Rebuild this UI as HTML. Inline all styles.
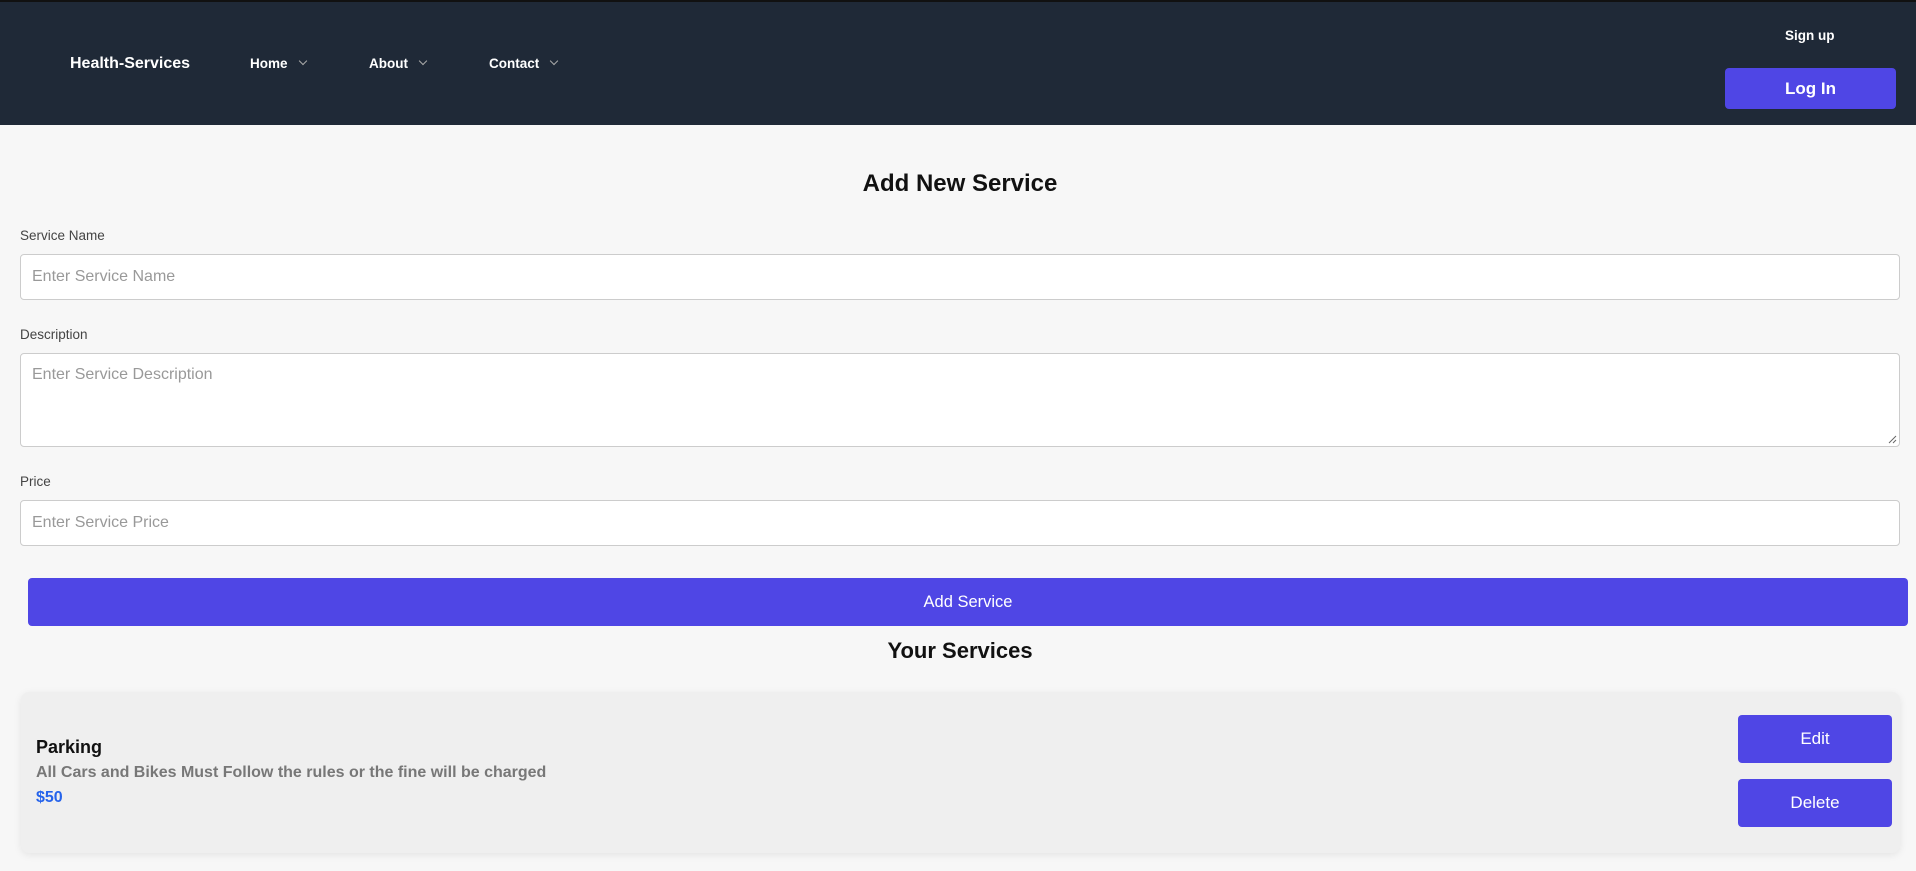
<!DOCTYPE html>
<html><head><style>
*{box-sizing:border-box;margin:0;padding:0}
body{width:1916px;height:871px;overflow:hidden;background:#f7f7f7;font-family:"Liberation Sans",Arial,sans-serif;position:relative}
.hdr{position:absolute;left:0;top:0;width:1916px;height:125px;background:#1f2937;border-top:2px solid #111;}
.t{position:absolute;white-space:nowrap}
.nav{color:#fff;font-weight:bold;font-size:13.5px;top:56px}
.chev{display:inline-block;width:6px;height:6px;border-right:1px solid #aaa;border-bottom:1px solid #aaa;transform:rotate(45deg);margin-left:12px;position:relative;top:-4px}
.btn{position:absolute;background:#4f46e5;color:#fff;border-radius:4px;display:flex;align-items:center;justify-content:center}
.lbl{font-size:13.5px;color:#444;left:20px}
.inp{position:absolute;left:20px;width:1880px;background:#fff;border:1px solid #ccc;border-radius:4px;color:#999;font-size:16px;padding-left:11px}
</style></head><body>
<div class="hdr"></div>
<div class="t" style="left:70px;top:55px;color:#fff;font-weight:bold;font-size:16px">Health-Services</div>
<div class="t nav" style="left:250px">Home<span class="chev"></span></div>
<div class="t nav" style="left:369px">About<span class="chev"></span></div>
<div class="t nav" style="left:489px">Contact<span class="chev"></span></div>
<div class="t" style="left:1785px;top:28px;color:#fff;font-weight:bold;font-size:13.5px">Sign up</div>
<div class="btn" style="left:1725px;top:68px;width:171px;height:41px;font-size:17px;font-weight:bold">Log In</div>

<div class="t" style="left:2px;width:1916px;text-align:center;top:170px;font-size:24px;font-weight:bold;color:#111">Add New Service</div>
<div class="t lbl" style="top:228px">Service Name</div>
<div class="inp" style="top:254px;height:46px;line-height:44px">Enter Service Name</div>
<div class="t lbl" style="top:327px">Description</div>
<div class="inp" style="top:353px;height:94px;padding-top:12px">Enter Service Description
<svg style="position:absolute;right:2px;bottom:2px" width="10" height="10"><path d="M9 2L2 9M9 6L6 9" stroke="#666" stroke-width="1"/></svg></div>
<div class="t lbl" style="top:474px">Price</div>
<div class="inp" style="top:500px;height:46px;line-height:44px">Enter Service Price</div>
<div class="btn" style="left:28px;top:578px;width:1880px;height:48px;font-size:16.5px">Add Service</div>
<div class="t" style="left:0;width:1920px;text-align:center;top:638px;font-size:22px;font-weight:bold;color:#111">Your Services</div>
<div style="position:absolute;left:21px;top:692px;width:1879px;height:161px;background:#efefef;border-radius:8px;box-shadow:0 2px 8px rgba(0,0,0,0.08)"></div>
<div class="t" style="left:36px;top:737px;font-size:18px;font-weight:bold;color:#111">Parking</div>
<div class="t" style="left:36px;top:764px;font-size:16px;font-weight:bold;color:#777">All Cars and Bikes Must Follow the rules or the fine will be charged</div>
<div class="t" style="left:36px;top:789px;font-size:16px;font-weight:bold;color:#2563eb">$50</div>
<div class="btn" style="left:1738px;top:715px;width:154px;height:48px;font-size:17px">Edit</div>
<div class="btn" style="left:1738px;top:779px;width:154px;height:48px;font-size:17px">Delete</div>
</body></html>
